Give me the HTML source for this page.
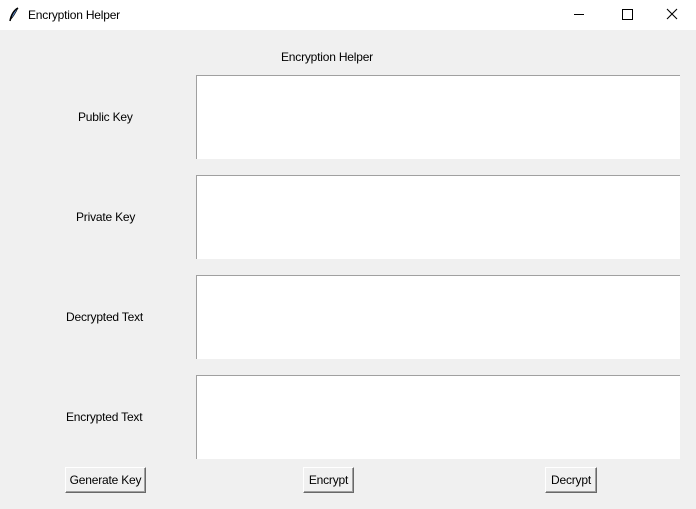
<!DOCTYPE html><html><head><style>
body{margin:0;width:696px;height:509px;background:#f0f0f0;font-family:"Liberation Sans",sans-serif;font-size:12px;color:#000;position:relative;overflow:hidden}
.t{position:absolute;left:0;top:0;width:696px;height:30px;background:#fff}
.a{position:absolute;white-space:nowrap}
.s{letter-spacing:-0.2px}
.box{position:absolute;left:196px;width:484px;height:84px;background:#fff;border-top:1px solid #a0a0a0;border-left:1px solid #a0a0a0;box-sizing:border-box}
.btn{position:absolute;top:467px;height:26px;box-sizing:border-box;background:#f0f0f0;border:1px solid;border-color:#fff #696969 #696969 #fff;box-shadow:inset -1px -1px 0 #a0a0a0;text-align:center;line-height:24px;letter-spacing:-0.2px}
</style></head><body>
<div class="t">
<svg class="a" style="left:8px;top:7px" width="12" height="16" viewBox="0 0 12 16"><path d="M10 1C6 3 3 8 2 14" stroke="#000" stroke-width="1.5" fill="none"/><path d="M10 1C8 5 6 9 3 12C4 7 6 4 10 1Z" fill="#5b8fd6" stroke="#000" stroke-width=".7"/></svg>
<div class="a s" style="left:28px;top:8px">Encryption Helper</div>
<div class="a" style="left:574px;top:14px;width:10px;height:1px;background:#000"></div>
<div class="a" style="left:622px;top:9px;width:9px;height:9px;border:1px solid #000"></div>
<svg class="a" style="left:666px;top:8px" width="12" height="12"><path d="M1 1L11 11M11 1L1 11" stroke="#000" stroke-width="1.1"/></svg>
</div>
<div class="a s" style="left:281px;top:50px">Encryption Helper</div>
<div class="a s" style="left:78px;top:110px">Public Key</div>
<div class="a s" style="left:76px;top:210px">Private Key</div>
<div class="a s" style="left:66px;top:310px">Decrypted Text</div>
<div class="a s" style="left:66px;top:410px">Encrypted Text</div>
<div class="box" style="top:75px"></div>
<div class="box" style="top:175px"></div>
<div class="box" style="top:275px"></div>
<div class="box" style="top:375px"></div>
<div class="btn" style="left:65px;width:81px">Generate Key</div>
<div class="btn" style="left:303px;width:51px">Encrypt</div>
<div class="btn" style="left:545px;width:52px">Decrypt</div>
</body></html>
